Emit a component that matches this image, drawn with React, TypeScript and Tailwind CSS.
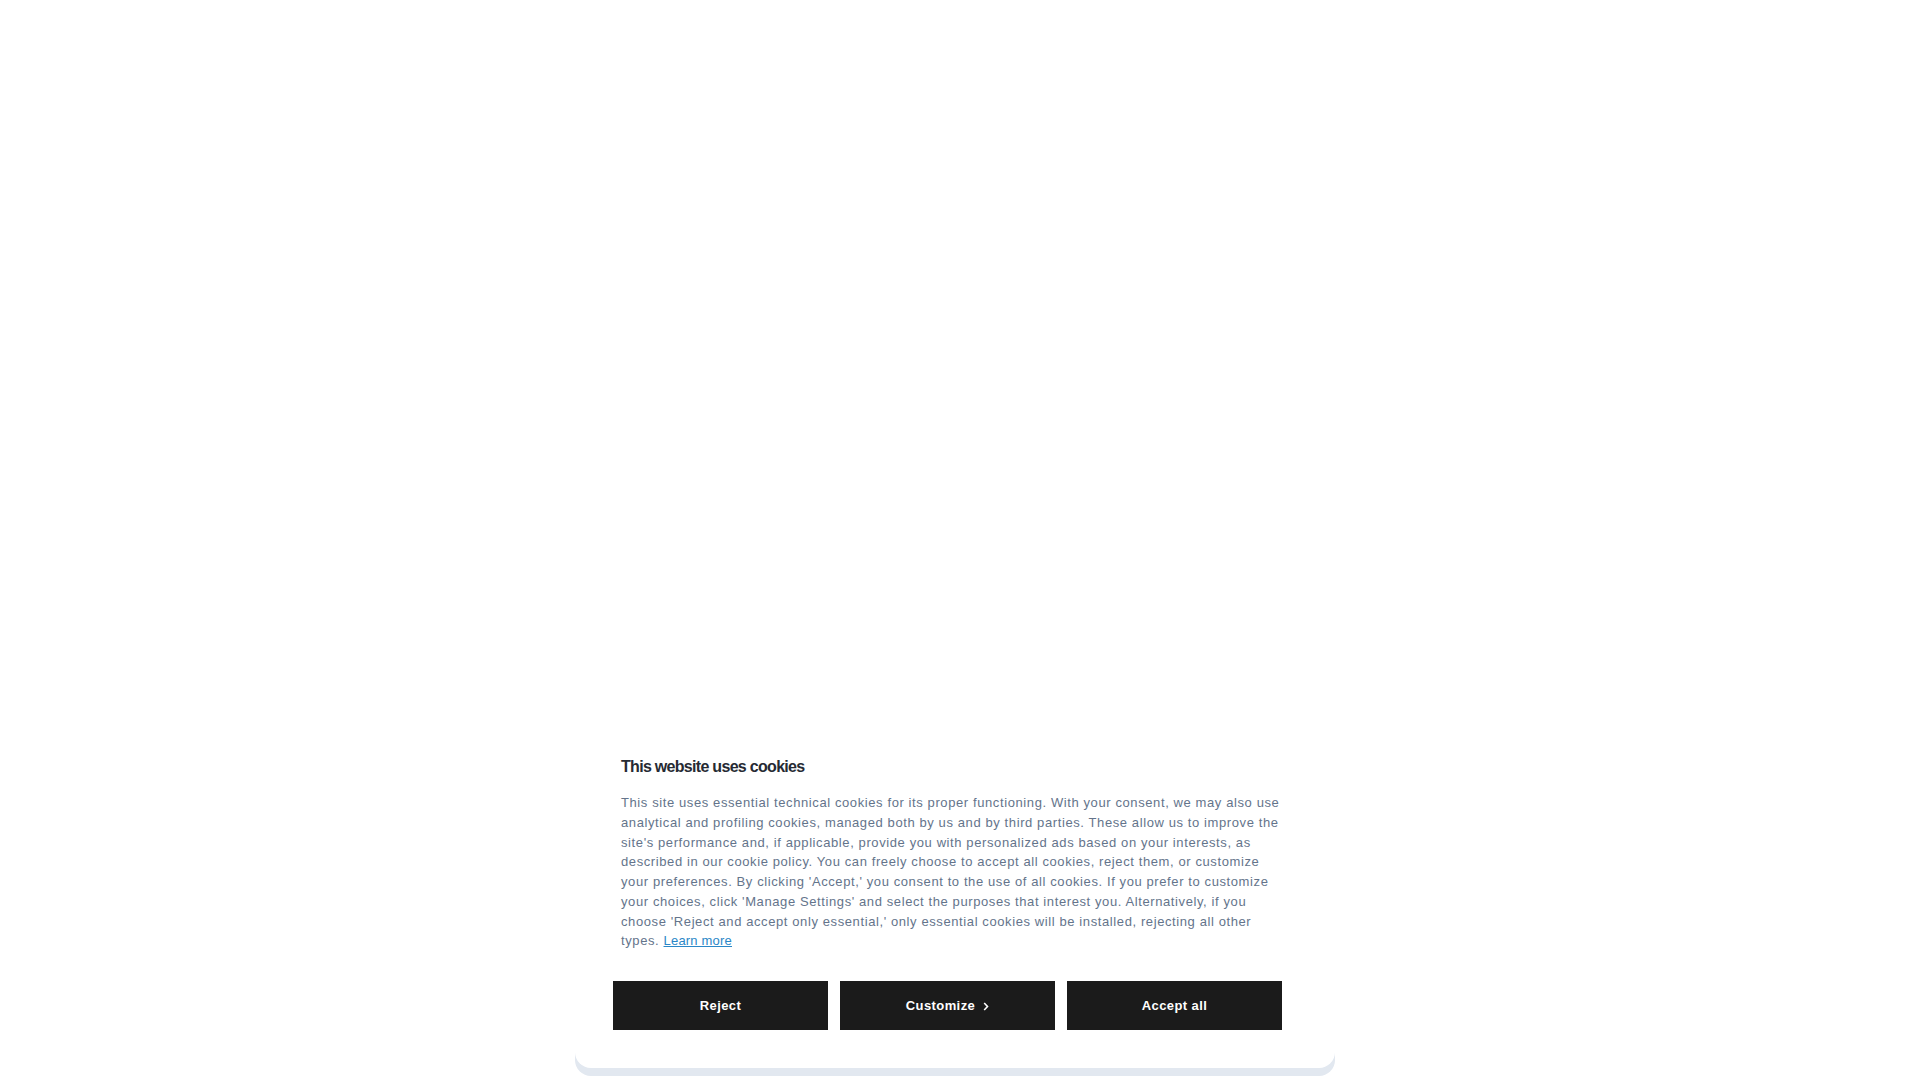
import React from 'react';

const buttons = ['Reject', 'Customize', 'Accept all'];

export default function App() {
    return (
        <div className="h-screen w-full bg-white flex flex-col justify-end items-center pr-[10px] pb-3 overflow-hidden" style={{ fontFamily: '"Liberation Sans", Arial, sans-serif' }}>
            <div className="w-[760px] bg-white rounded-2xl shadow-[0_8px_0_#e2e8f0] px-[38px] pt-[39px] pb-[38px]">
                <div className="pl-2 pr-[14px]">
                    <h2 className="text-[16px] leading-6 font-bold text-[#262a33] tracking-[-0.7px]">This website uses cookies</h2>
                    <p className="mt-[14px] text-[13px] leading-[19.7px] text-[#64748b] tracking-[0.6px]">
                        This site uses essential technical cookies for its proper functioning. With your consent, we may also use analytical and profiling cookies, managed both by us and by third parties. These allow us to improve the site's performance and, if applicable, provide you with personalized ads based on your interests, as described in our cookie policy. You can freely choose to accept all cookies, reject them, or customize your preferences. By clicking 'Accept,' you consent to the use of all cookies. If you prefer to customize your choices, click 'Manage Settings' and select the purposes that interest you. Alternatively, if you choose 'Reject and accept only essential,' only essential cookies will be installed, rejecting all other types.{' '}
                        <a href="#" className="text-[#2b87c7] underline tracking-[0.2px] whitespace-nowrap">Learn more</a>
                    </p>
                </div>
                <div className="mt-[30px] flex gap-3">
                    {buttons.map(label => (
                        <button key={label} className="w-[215px] h-[49px] bg-[#1b1b1b] text-white text-[13px] font-bold tracking-[0.4px] flex items-center justify-center gap-2">
                            {label}
                            {label === 'Customize' && (
                                <svg width="6" height="9" viewBox="0 0 6 9" fill="none" className="mt-px">
                                    <path d="M1.2 1l3.3 3.5L1.2 8" stroke="white" strokeWidth="1.6" />
                                </svg>
                            )}
                        </button>
                    ))}
                </div>
            </div>
        </div>
    );
}
